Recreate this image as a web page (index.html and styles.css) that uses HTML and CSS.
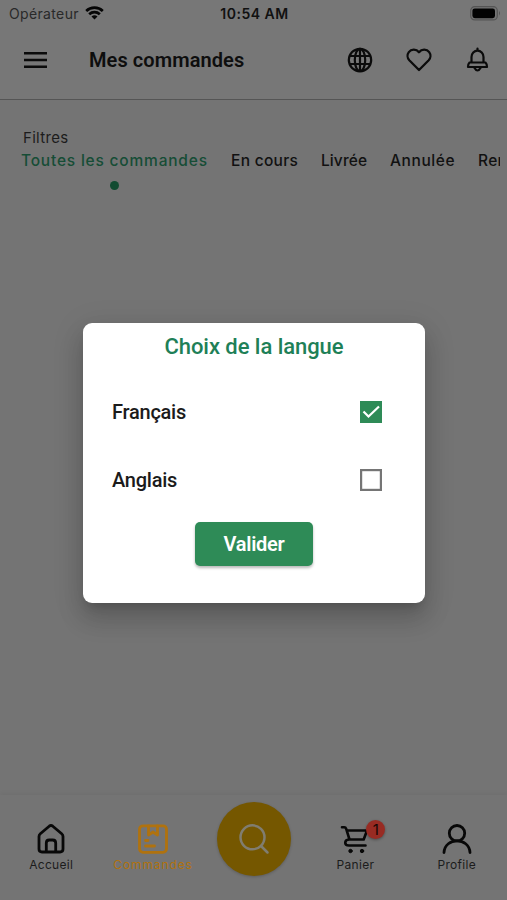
FILE: index.html
```html
<!DOCTYPE html>
<html lang="fr">
<head>
<meta charset="utf-8">
<title>Mes commandes</title>
<link rel="stylesheet" href="styles.css">
</head>
<body>
<div class="screen">
  <div class="status">
    <div class="carrier"><span class="carrier-name">Opérateur</span>
      <svg width="19" height="14" viewBox="0 0 19 14" fill="none" stroke="#050505" stroke-width="2.7"><path d="M1.2 5a12 12 0 0 1 16.6 0M4.2 8.3a7.7 7.7 0 0 1 10.6 0"/><path d="M9.5 13.5L6.5 10.6a4.4 4.4 0 0 1 6 0z" fill="#050505" stroke="none"/></svg>
    </div>
    <span class="time">10:54 AM</span>
    <svg class="battery" width="31" height="15" viewBox="0 0 31 15"><rect x=".7" y=".7" width="26.6" height="13.2" rx="4" fill="#747474" stroke="#555" stroke-width="1.2"/><rect x="2.4" y="2.4" width="22.6" height="9.8" rx="2.4" fill="#020202"/><path d="M29 5q2 2 0 4.5z" fill="#555"/></svg>
  </div>
  <header class="appbar">
    <svg class="menu" width="23" height="16" viewBox="0 0 23 16"><path d="M0 1.3h23M0 8h23M0 14.7h23" stroke="#0b0b0b" stroke-width="2.5"/></svg>
    <h1 class="title">Mes commandes</h1>
    <div class="actions">
      <svg width="26" height="26" viewBox="0 0 26 26" fill="none" stroke="#0b0b0b" stroke-width="2.2"><circle cx="13" cy="13" r="11.2"/><ellipse cx="13" cy="13" rx="5.2" ry="11.2"/><path d="M13 2v22M2.5 9h21M2.5 17h21"/></svg>
      <svg width="26" height="26" viewBox="0 0 26 26" fill="none" stroke="#0b0b0b" stroke-width="2.3" stroke-linejoin="round"><path d="M13 23L3.3 13.3C1.2 11.1 1 7.5 2.8 5.1C5.3 1.8 10.3 1.9 13 5.2C15.700 1.900 20.700 1.800 23.200 5.100C25 7.500 24.800 11.100 22.700 13.300z"/></svg>
      <svg width="26" height="26" viewBox="0 0 26 26" fill="none" stroke="#0b0b0b" stroke-width="2.2" stroke-linecap="round" stroke-linejoin="round"><path d="M12.500 1.500v2M6.500 15.500V10a6 6.300 0 0 1 12 0v5.500M4.500 15.500h16q1.500 1.500 1.500 4.500h-19q0-3 1.500-4.500zM9.200 20.500q3.300 6 6.600 0"/></svg>
    </div>
  </header>
  <main class="orders">
    <div class="filter-label">Filtres</div>
    <nav class="tabs">
      <span class="tab active">Toutes les commandes</span>
      <span class="tab t2">En cours</span>
      <span class="tab t3">Livrée</span>
      <span class="tab t4">Annulée</span>
      <span class="tab">Remboursée</span>
    </nav>
  </main>
  <nav class="bottom">
    <div class="item"><svg width="32" height="32" viewBox="0 0 32 32" fill="none" stroke="#080808" stroke-width="2.800" stroke-linejoin="round"><path d="M4 13.500q0-1.700 1.300-2.800l8.900-7.500q1.800-1.400 3.600 0l8.900 7.500Q28 11.800 28 13.500V26q0 3-3 3H7q-3 0-3-3zM11.300 29V20q0-3 3-3h3.400q3 0 3 3v9"/></svg><span>Accueil</span></div>
    <div class="item current"><svg width="32" height="32" viewBox="0 0 32 32" fill="none" stroke="#b0720e" stroke-width="2.800" stroke-linejoin="round" stroke-linecap="round"><rect x="2.500" y="2.800" width="27" height="26.500" rx="3.500"/><path d="M11.500 3v9l4.500-3 4.500 3V3M8.500 17.500h2.500M8.500 23h9"/></svg><span>Commandes</span></div>
    <div class="item"><div class="search"><svg width="32" height="32" viewBox="0 0 32 32" fill="none" stroke="#807d70" stroke-width="2.500" stroke-linecap="round"><circle cx="14.500" cy="14.300" r="12"/><path d="M23 23l6.500 6.500"/></svg></div></div>
    <div class="item"><div class="cart"><svg width="32" height="32" viewBox="0 0 32 32" fill="none" stroke="#080808" stroke-width="2.600" stroke-linejoin="round" stroke-linecap="round"><path d="M3 4.300h2.200q1.500 0 2 1.500L10.500 16.500h14.200L28 7.500H8M10 16.500c-5 .5-5 6 0 6h16.500"/><circle cx="11.500" cy="28" r="1.700" fill="#080808" stroke-width="1"/><circle cx="23" cy="28" r="1.700" fill="#080808" stroke-width="1"/></svg><b class="badge">1</b></div><span>Panier</span></div>
    <div class="item"><svg width="32" height="32" viewBox="0 0 32 32" fill="none" stroke="#080808" stroke-width="2.800" stroke-linecap="round"><circle cx="16" cy="10.200" r="7.700"/><path d="M3 29.500c1-15.500 25-15.500 26 0"/></svg><span>Profile</span></div>
  </nav>
</div>
<div class="dialog" role="dialog">
  <h2 class="dialog-title">Choix de la langue</h2>
  <div class="option"><span>Français</span><svg width="22" height="22" viewBox="0 0 22 22" fill="none"><path d="M0 0h22v22H0z" fill="#2e8b57"/><path d="M3.500 10.500l5 5L19 5.500" stroke="#fff" stroke-width="2.200"/></svg></div>
  <div class="option"><span>Anglais</span><svg width="22" height="22" viewBox="0 0 22 22"><rect x="1.100" y="1.100" width="19.800" height="19.800" fill="#fff" stroke="#757575" stroke-width="2.200"/></svg></div>
  <button class="submit">Valider</button>
</div>
</body>
</html>
```
FILE: styles.css
```css
* { box-sizing: border-box; }
body { margin: 0; width: 507px; height: 900px; overflow: hidden; background: #747474; color: #111; font-family: Roboto, sans-serif; }
svg { display: block; flex: none; }
.screen { height: 900px; display: flex; flex-direction: column; }
.status { height: 28px; padding: 0 7px 0 9px; display: grid; grid-template-columns: 1fr auto 1fr; align-items: center; background: #777; font-family: Inter, sans-serif; font-size: 14px; }
.carrier { display: flex; align-items: center; gap: 6px; color: #292929; }
.carrier-name { letter-spacing: .35px; margin-top: -1px; }
.carrier svg { margin-top: -3px; }
.time { font-weight: 600; letter-spacing: .5px; color: #111; margin-top: -1px; }
.battery { justify-self: end; margin: -2px -1px 0 0; }
.appbar { height: 72px; padding: 0 16px 7px 24px; display: flex; align-items: center; border-bottom: 1px solid #555; background: #777; }
.title { margin: 0 0 0 42px; font-size: 20px; font-weight: 600; letter-spacing: .08px; color: #0e0e0e; }
.actions { margin-left: auto; display: flex; gap: 33px; }
.orders { padding: 27px 7px 0 21px; flex: 1; font-family: Inter, sans-serif; }
.filter-label { height: 21px; line-height: 21px; padding-left: 2px; font-size: 15px; letter-spacing: .3px; color: #1c1c1c; }
.tabs { height: 46px; display: flex; gap: 23px; overflow: hidden; white-space: nowrap; font-size: 15.500px; font-weight: 500; line-height: 25px; letter-spacing: .3px; color: #111; }
.tab { flex: none; }
.active { width: 187px; color: #164d36; letter-spacing: .8px; }
.active::after { content: ""; display: block; width: 9px; height: 9px; margin: 8px auto 0; border-radius: 50%; background: #124b31; }
.t2 { width: 67px; }
.t3 { width: 46px; letter-spacing: .1px; }
.t4 { width: 65px; letter-spacing: .6px; }
.bottom { height: 105px; display: grid; grid-template-columns: repeat(5, 1fr); background: #747474; box-shadow: 0 -2px 4px rgba(0, 0, 0, .04); font-family: Inter, sans-serif; font-size: 12px; color: #1c1c1c; }
.item { display: flex; flex-direction: column; align-items: center; padding: 28px 0 0 1px; }
.item span { line-height: 20px; letter-spacing: .3px; }
.item.current { color: #b0720e; }
.item.current span { letter-spacing: .9px; margin-right: -.9px; }
.search { width: 74px; height: 74px; margin-top: -21px; border-radius: 50%; background: #755700; display: grid; place-items: center; box-shadow: 0 1px 3px rgba(0, 0, 0, .2); }
.cart { position: relative; }
.badge { position: absolute; left: 27px; top: -3px; width: 19px; height: 19px; border-radius: 50%; background: #982b23; box-shadow: 0 1px 3px rgba(0, 0, 0, .35); font: 15px/19px Inter, sans-serif; text-align: center; color: #160604; }
.dialog { position: absolute; left: 83px; top: 323px; width: 342px; height: 280px; padding: 10px 42px 0 29px; border-radius: 9px; background: #fff; box-shadow: 0 16px 24px 2px rgba(0, 0, 0, .14), 0 6px 30px 5px rgba(0, 0, 0, .08), 0 8px 10px -5px rgba(0, 0, 0, .16); }
.dialog-title { margin: 0 -13px 27px 0; height: 28px; line-height: 28px; text-align: center; font-size: 22px; font-weight: 500; letter-spacing: -.05px; color: #1e8057; }
.option { height: 48px; margin-bottom: 20px; display: flex; align-items: center; justify-content: space-between; font-size: 20px; font-weight: 500; letter-spacing: -.25px; color: #1b1b1b; }
.option svg { margin-right: 1px; }
.submit { display: block; width: 118px; height: 44px; margin: -2px auto 0 83px; border: 0; border-radius: 5px; background: #2e8b57; color: #fff; font: 600 20px Roboto, sans-serif; letter-spacing: -.3px; box-shadow: 0 2px 3px rgba(0, 0, 0, .28); }
```
